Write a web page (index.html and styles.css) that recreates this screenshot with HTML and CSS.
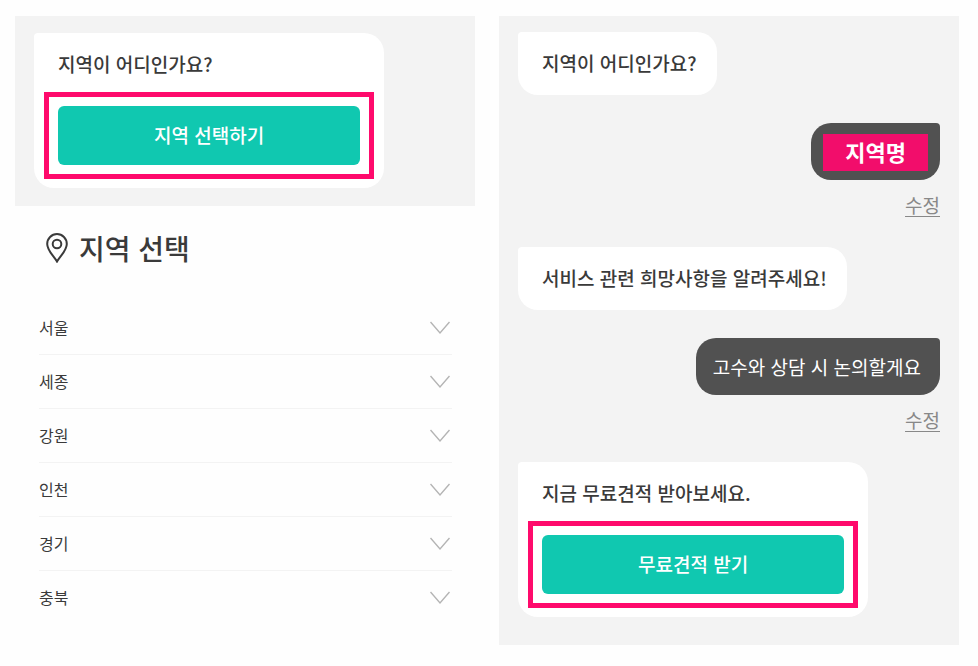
FILE: index.html
```
<!DOCTYPE html>
<html lang="ko">
<head>
<meta charset="utf-8">
<title>지역 선택</title>
<link rel="stylesheet" href="styles.css">
</head>
<body>

<div class="screens">

  <div class="screen">
    <div class="chat">
      <div class="bubble bubble-action">
        <p>지역이 어디인가요?</p>
        <div class="highlight">
          <button type="button" class="btn">지역 선택하기</button>
        </div>
      </div>
    </div>

    <div class="region">
      <h1>
        <svg class="pin" width="22" height="30" viewBox="0 0 22 30" aria-hidden="true">
          <path d="M11 28.6 C7.5 22.5 1.2 17.5 1.2 10.9 A9.8 9.8 0 0 1 20.8 10.9 C20.8 17.5 14.5 22.5 11 28.6 Z"/>
          <circle cx="11" cy="11" r="4.3"/>
        </svg>
        지역 선택
      </h1>
      <ul class="region-list">
        <li><button type="button">서울<svg width="20" height="14" viewBox="0 0 20 14"><path d="M0.5 1 L10 12 L19.5 1"/></svg></button></li>
        <li><button type="button">세종<svg width="20" height="14" viewBox="0 0 20 14"><path d="M0.5 1 L10 12 L19.5 1"/></svg></button></li>
        <li><button type="button">강원<svg width="20" height="14" viewBox="0 0 20 14"><path d="M0.5 1 L10 12 L19.5 1"/></svg></button></li>
        <li><button type="button">인천<svg width="20" height="14" viewBox="0 0 20 14"><path d="M0.5 1 L10 12 L19.5 1"/></svg></button></li>
        <li><button type="button">경기<svg width="20" height="14" viewBox="0 0 20 14"><path d="M0.5 1 L10 12 L19.5 1"/></svg></button></li>
        <li><button type="button">충북<svg width="20" height="14" viewBox="0 0 20 14"><path d="M0.5 1 L10 12 L19.5 1"/></svg></button></li>
      </ul>
    </div>
  </div>

  <div class="screen chat">
    <div class="bubble">
      <p>지역이 어디인가요?</p>
    </div>
    <div class="answer answer-tag"><span class="tag">지역명</span></div>
    <a class="edit" href="#">수정</a>

    <div class="bubble">
      <p>서비스 관련 희망사항을 알려주세요!</p>
    </div>
    <div class="answer">고수와 상담 시 논의할게요</div>
    <a class="edit" href="#">수정</a>

    <div class="bubble bubble-action">
      <p>지금 무료견적 받아보세요.</p>
      <div class="highlight">
        <button type="button" class="btn">무료견적 받기</button>
      </div>
    </div>
  </div>

</div>

</body>
</html>
```

FILE: styles.css
```
* { box-sizing: border-box; }

body {
  margin: 0;
  background: #fefefe;
  color: #3a3a3a;
  font-family: "Noto Sans CJK KR", sans-serif;
  font-size: 19px;
  line-height: 27px;
}

p, h1, ul { margin: 0; padding: 0; }
button { font-family: inherit; cursor: pointer; }

.screens {
  display: grid;
  grid-template-columns: 1fr 1fr;
  gap: 24px;
  padding: 16px 19px 21px 15px;
}

/* chat */
.chat {
  display: flex;
  flex-direction: column;
  align-items: flex-start;
  padding: 16px 19px 28px;
  background: #f3f3f3;
}

.screen > .chat { padding: 17px 19px 18px; }

.bubble {
  padding: 17px 20px 19px 24px;
  background: #fff;
  border-radius: 4px 20px 20px 20px;
  font-weight: 500;
}

.bubble-action {
  width: 83%;
  padding: 17px 10px 9px;
}

.bubble-action p { padding: 0 14px 15px; }

.highlight {
  padding: 9px;
  border: 5px solid #ff0a6c;
}

.btn {
  display: block;
  width: 100%;
  padding: 15px 16px 17px;
  border: 0;
  border-radius: 6px;
  background: #10c8b0;
  color: #fff;
  font-size: 19px;
  font-weight: 500;
  line-height: 27px;
}

.answer {
  align-self: flex-end;
  margin-top: 28px;
  padding: 15px 19px 15px 17px;
  background: #515151;
  border-radius: 20px 4px 20px 20px;
  color: #fff;
}

.answer-tag { padding: 11px 12px 9px; }

.tag {
  display: block;
  padding: 4px 22px 6px;
  background: #f20d6b;
  font-size: 22px;
  font-weight: 700;
}

.edit {
  align-self: flex-end;
  margin: 11px 0 29px;
  color: #888;
  text-underline-offset: 3px;
}

/* region picker */
.region { padding: 26px 23px 0 24px; }

.region h1 {
  display: flex;
  align-items: center;
  gap: 11px;
  padding-left: 7px;
  font-size: 28px;
  font-weight: 500;
  line-height: 32px;
}

.pin {
  fill: none;
  stroke: #3a3a3a;
  stroke-width: 2;
}

.region-list {
  padding-top: 37px;
  list-style: none;
}

.region-list li + li { border-top: 1px solid #f3f3f3; }

.region-list button {
  display: flex;
  justify-content: space-between;
  align-items: center;
  width: 100%;
  padding: 13px 2px 13px 0;
  border: 0;
  background: none;
  color: #3a3a3a;
  font-size: 16px;
  line-height: 27px;
}

.region-list svg {
  fill: none;
  stroke: #b4b4b4;
  stroke-width: 1.4;
}
```
